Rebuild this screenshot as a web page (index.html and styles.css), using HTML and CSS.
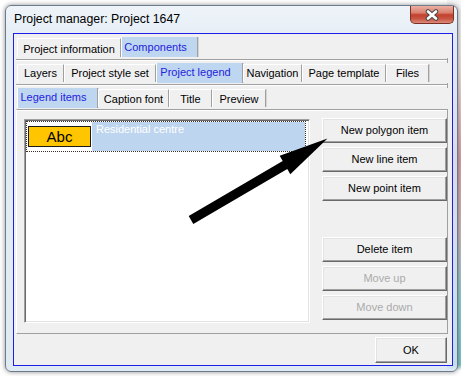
FILE: index.html
```html
<!DOCTYPE html>
<html>
  <head>
    <title>Project manager: Project 1647</title>
    <link rel="stylesheet" href="styles.css">
  </head>
  <body>
    <div class="window">
      <div class="titlebar">
        <span class="title">Project manager: Project 1647</span>
        <div class="close-btn">
          <svg width="16" height="12" viewBox="0 0 16 12">
            <path d="M4 2.5 L12 9.5 M12 2.5 L4 9.5" stroke="#4a4a4a" stroke-width="4.6" stroke-linecap="round"/>
            <path d="M4 2.5 L12 9.5 M12 2.5 L4 9.5" stroke="#fff" stroke-width="2.6" stroke-linecap="round"/>
          </svg>
        </div>
      </div>
      <div class="client">
        <div class="tab-row row-top">
          <div class="tab tab-info">Project information</div>
          <div class="tab active tab-components">Components</div>
        </div>
        <div class="tab-rule"></div>
        <div class="tab-row">
          <div class="tab tab-layers">Layers</div>
          <div class="tab tab-style">Project style set</div>
          <div class="tab active tab-legend">Project legend</div>
          <div class="tab tab-nav">Navigation</div>
          <div class="tab tab-template">Page template</div>
          <div class="tab tab-files">Files</div>
        </div>
        <div class="tab-rule"></div>
        <div class="tab-row row-low">
          <div class="tab active tab-items">Legend items</div>
          <div class="tab tab-caption">Caption font</div>
          <div class="tab tab-title">Title</div>
          <div class="tab tab-preview">Preview</div>
        </div>
        <div class="page">
          <div class="listbox">
            <div class="legend-item">
              <div class="swatch-cell"><div class="swatch">Abc</div></div>
              <div class="item-label">Residential centre</div>
            </div>
          </div>
          <div class="button-col">
            <button type="button">New polygon item</button>
            <button type="button">New line item</button>
            <button type="button">New point item</button>
            <button type="button" class="group-start">Delete item</button>
            <button type="button" disabled>Move up</button>
            <button type="button" disabled>Move down</button>
          </div>
        </div>
        <div class="dialog-footer">
          <button type="button" class="ok-btn">OK</button>
        </div>
      </div>
    </div>
    <svg class="pointer-arrow" width="461" height="376" viewBox="0 0 461 376">
      <polygon points="188.7,216.1 282.7,161.1 279.7,155.8 327.5,138.5 290.3,174.2 287.3,168.9 193.3,223.9" fill="#000"/>
    </svg>
  </body>
</html>
```

FILE: styles.css
```css
html, body {
  height: 100%;
}
body {
  margin: 0;
  overflow: hidden;
  font-family: "Liberation Sans", Arial, sans-serif;
  font-size: 11px;
  color: #000;
  background:
    linear-gradient(180deg, #f6f6f6 0%, #eee4e7 18%, #d9a3ab 42%, #cdb9c1 62%, #92d0d3 80%, #7fc7c9 97%, #fff 98.5%) right top / 14px 100% no-repeat,
    #fff;
}
.window {
  margin: 5px 0 0 5px;
  width: 453px;
  box-sizing: border-box;
  border: 1px solid #6d7c8c;
  border-radius: 6px;
  background: linear-gradient(180deg, rgba(236,242,248,0.9) 0%, rgba(222,233,243,0.82) 10%, rgba(214,228,240,0.78) 100%);
  box-shadow: 0 0 5px rgba(0,0,0,0.45);
  padding-bottom: 5px;
}
.titlebar {
  display: flex;
  align-items: flex-start;
  height: 27px;
}
.title {
  padding: 6px 0 0 8px;
  font-size: 12.3px;
  line-height: 14px;
  color: #000;
}
.close-btn {
  margin-left: auto;
  margin-right: 3px;
  width: 44px;
  height: 18px;
  box-sizing: border-box;
  border: 1px solid #7a3026;
  border-top: none;
  border-radius: 0 0 5px 5px;
  background: linear-gradient(180deg, #ebb0a3 0%, #d98070 40%, #c2402c 52%, #c85642 75%, #dc8a78 100%);
  display: flex;
  align-items: center;
  justify-content: center;
}
.client {
  margin: 0 4px 0 7px;
  background: #f0f0f0;
  border: 1px solid #1e1ee6;
  padding: 1px 4px 1px 2px;
}
.tab-row {
  display: flex;
  align-items: flex-start;
  height: 23px;
  box-sizing: border-box;
  padding: 2px 0 0 1px;
}
.row-top {
  height: 24px;
}
.row-low {
  padding-top: 2px;
}
.tab {
  box-sizing: border-box;
  height: 18px;
  margin-top: 1px;
  padding-top: 2px;
  line-height: 13px;
  text-align: center;
  white-space: nowrap;
  border-top: 1px solid #fff;
  border-left: 1px solid #fff;
  border-right: 1px solid #a0a0a0;
  box-shadow: 1px 0 0 #d4d4d4;
}
.row-top .tab {
  height: 19px;
  padding-top: 4px;
}
.row-low .tab {
  padding-top: 3px;
}
.tab.active {
  margin-top: 0;
  height: 20px;
  padding-top: 3px;
  padding-right: 8px;
  border-top: none;
  background: #bfd6f1;
  color: #2323dc;
}
.row-top .tab.active {
  padding-top: 4px;
  height: 20px;
}
.tab-info { width: 104px; }
.tab-components { width: 77px; }
.tab-layers { width: 47px; }
.tab-style { width: 92px; }
.tab-legend { width: 87px; }
.tab-nav { width: 59px; }
.tab-template { width: 84px; }
.tab-files { width: 43px; }
.tab-items { width: 81px; }
.tab-caption { width: 71px; }
.tab-title { width: 43px; }
.tab-preview { width: 54px; }
.tab-rule {
  position: relative;
  height: 0;
  border-top: 1px solid #a0a0a0;
  border-bottom: 1px solid #fff;
}
.tab-rule::after {
  content: "";
  position: absolute;
  right: 0;
  top: -2px;
  width: 1px;
  height: 5px;
  background: #a0a0a0;
}
.page {
  display: flex;
  align-items: flex-start;
  gap: 12px;
  border-top: 1px solid #a0a0a0;
  border-left: 1px solid #fff;
  border-right: 1px solid #a0a0a0;
  border-bottom: 1px solid #a0a0a0;
  box-shadow: inset 0 1px 0 #fff;
  padding: 8px 0 10px 7px;
}
.listbox {
  margin-top: 1px;
  width: 286px;
  height: 204px;
  box-sizing: border-box;
  background: #fff;
  border: 1px solid;
  border-color: #a0a0a0 #fff #fff #a0a0a0;
  box-shadow: inset 1px 1px 0 #696969, inset -1px -1px 0 #e3e3e3;
  padding: 1px;
}
.legend-item {
  display: flex;
  width: 280px;
  height: 31px;
  box-sizing: border-box;
  border: 1px dotted #3a3228;
}
.swatch-cell {
  width: 65px;
  background: #fff;
}
.swatch {
  margin: 4px 0 0 1px;
  width: 63px;
  height: 21px;
  box-sizing: border-box;
  border: 1px solid #1a1a1a;
  background: #ffc600;
  font-size: 15px;
  line-height: 19px;
  text-align: center;
}
.item-label {
  flex: 1;
  background: #bed5ef;
  color: #fff;
  padding: 1px 0 0 4px;
  line-height: 13px;
}
.button-col {
  display: flex;
  flex-direction: column;
  gap: 4px;
}
button {
  width: 125px;
  height: 25px;
  box-sizing: border-box;
  margin: 0;
  padding: 0;
  font-family: "Liberation Sans", Arial, sans-serif;
  font-size: 11px;
  line-height: 13px;
  color: #000;
  background: #f0f0f0;
  border: 1px solid;
  border-color: #fff #696969 #696969 #fff;
  box-shadow: inset -1px -1px 0 #a0a0a0, inset 1px 1px 0 #e3e3e3;
}
button:disabled {
  color: #ababab;
}
.group-start {
  margin-top: 32px;
}
.dialog-footer {
  display: flex;
  justify-content: flex-end;
  padding: 3px 1px 1px 0;
}
.ok-btn {
  width: 72px;
  height: 26px;
}
.pointer-arrow {
  position: absolute;
  left: 0;
  top: 0;
  pointer-events: none;
}
```
